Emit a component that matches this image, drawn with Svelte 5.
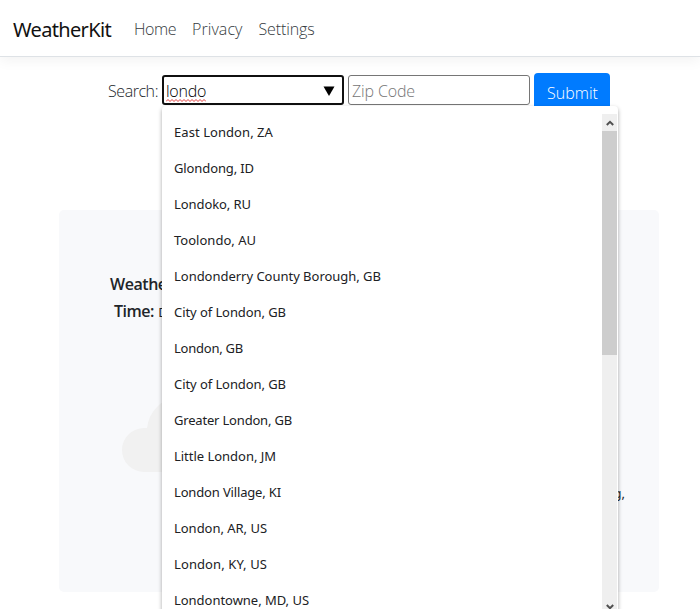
<script>
  const places = [
    ['East London, ZA', 99], ['Glondong, ID', 80], ['Londoko, RU', 77], ['Toolondo, AU', 82],
    ['Londonderry County Borough, GB', 207], ['City of London, GB', 112], ['London, GB', 69],
    ['City of London, GB', 112], ['Greater London, GB', 118], ['Little London, JM', 102],
    ['London Village, KI', 107], ['London, AR, US', 93], ['London, KY, US', 93], ['Londontowne, MD, US', 135]
  ];

  // Spreads the letters of a label evenly over the given width.
  function fit(node, width) {
    const n = node.textContent.length;
    node.style.letterSpacing = (width - node.getBoundingClientRect().width) / n + 'px';
  }
</script>

<div class="page">
  <header>
    <span class="brand"><span use:fit={98}>WeatherKit</span></span>
    <nav>
      <a href="#home"><span use:fit={42}>Home</span></a>
      <a href="#privacy"><span use:fit={50.5}>Privacy</span></a>
      <a href="#settings"><span use:fit={56}>Settings</span></a>
    </nav>
  </header>

  <form>
    <label for="zip"><span use:fit={50}>Search:</span></label>
    <div class="combo">
      <span class="typed"><span use:fit={40}>londo</span>
        <svg class="squiggle" width="40" height="3" viewBox="0 0 40 3"><path d="M0 2.5L2 .5L4 2.5L6 .5L8 2.5L10 .5L12 2.5L14 .5L16 2.5L18 .5L20 2.5L22 .5L24 2.5L26 .5L28 2.5L30 .5L32 2.5L34 .5L36 2.5L38 .5L40 2.5" fill="none" stroke="#e33c3c" /></svg>
      </span>
      <svg width="12" height="10" viewBox="0 0 12 10"><path d="M.5 .5H11.5L6 10Z" fill="#000" /></svg>
    </div>
    <div class="zip"><span use:fit={63}>Zip Code</span></div>
    <button type="button"><span use:fit={51}>Submit</span></button>

    <div class="menu">
      <ul>
        {#each places as [name, width]}
          <li><span use:fit={width}>{name}</span></li>
        {/each}
      </ul>
      <div class="scroll">
        <div class="arrow"><svg width="8" height="6" viewBox="0 0 8 6"><path d="M.8 5L4 1.8L7.2 5" fill="none" stroke="#505050" stroke-width="2" /></svg></div>
        <div class="thumb"></div>
        <div class="down"><svg width="8" height="6" viewBox="0 0 8 6"><path d="M.8 1L4 4.2L7.2 1" fill="none" stroke="#505050" stroke-width="2" /></svg></div>
      </div>
    </div>
  </form>

  <main>
    <div class="facts">
      <p><b use:fit={67}>Weather:</b></p>
      <p class="time"><b use:fit={40}>Time:</b> <span class="small">D</span></p>
      <svg class="cloud" width="130" height="84" viewBox="0 0 130 84"><path d="M22 83A22 22 0 0 1 22 39H25A35 35 0 0 1 92 29A27 27 0 0 1 103 83Z" fill="#f1f1f1" /></svg>
    </div>
    <p class="tail">g,</p>
  </main>
</div>

<style>
  :global(body) { margin: 0; background: #fff; overflow: hidden; }
  .page { height: 609px; overflow: hidden; color: #212529; font: 300 16px/24px "Open Sans", "Noto Sans", sans-serif; }
  span, b { white-space: nowrap; }
  header { box-sizing: border-box; height: 57px; display: flex; align-items: center; padding: 1px 13px 0; border-bottom: 1px solid #dee2e6; box-shadow: 0 4px 12px rgba(0, 0, 0, .05); }
  .brand { width: 121px; padding-top: 3px; font: 400 20px/30px "Noto Sans", sans-serif; color: #111; }
  nav { display: flex; gap: 16px; padding-top: 1px; }
  nav a { color: #343a40; text-decoration: none; }
  form { position: relative; height: 153px; box-sizing: border-box; display: flex; align-items: flex-start; padding: 16px 0 0 108px; }
  label { width: 54px; padding-top: 6px; }
  .combo, .zip { box-sizing: border-box; height: 30px; width: 182px; margin: 2px 4px 0 0; border-radius: 3px; display: flex; align-items: center; }
  .combo { border: 2px solid #101010; padding: 1px 6px 0 2px; justify-content: space-between; color: #000; }
  .combo > svg { margin-right: 1px; }
  .typed { position: relative; }
  .squiggle { position: absolute; left: 0; top: 20px; }
  .zip { border: 1px solid #767676; padding: 1px 0 0 3px; color: #757575; }
  button { box-sizing: border-box; width: 76px; height: 38px; padding: 1px 0 0 13px; text-align: left; border: 0; border-radius: 4px; background: #007bff; color: #fff; font: inherit; }
  .menu { position: absolute; left: 162px; top: 49px; z-index: 2; width: 456px; height: 530px; box-sizing: border-box; padding-top: 8px; background: #fff; border-radius: 4px; box-shadow: 0 2px 4px rgba(0, 0, 0, .35); display: flex; }
  ul { list-style: none; margin: 0; padding: 0; flex: 1; }
  li { height: 36px; padding-left: 12px; box-sizing: border-box; font: 400 13px/37px "Noto Sans", sans-serif; color: #202124; }
  .scroll { width: 15px; margin-right: 1px; background: #efefef; }
  .arrow { height: 17px; display: grid; place-items: center; }
  .thumb { height: 224px; background: #cdcdcd; }
  .down { margin-top: 249px; display: flex; justify-content: center; }
  .arrow svg, .down svg { display: block; }
  main { box-sizing: border-box; width: 600px; height: 382px; margin-left: 59px; background: #f8f9fb; border-radius: 5px; display: flex; justify-content: space-between; padding: 62px 34px 0 51px; }
  p { margin: 0 0 3px; }
  b { font: 600 16px/24px "Open Sans", sans-serif; }
  .time { padding-left: 4px; }
  .small { font: 400 13px/24px "Noto Sans", sans-serif; }
  .cloud { display: block; margin: 65px 0 0 12px; }
  .tail { padding-top: 211px; font: 400 13px/20px "Noto Sans", sans-serif; }
</style>
